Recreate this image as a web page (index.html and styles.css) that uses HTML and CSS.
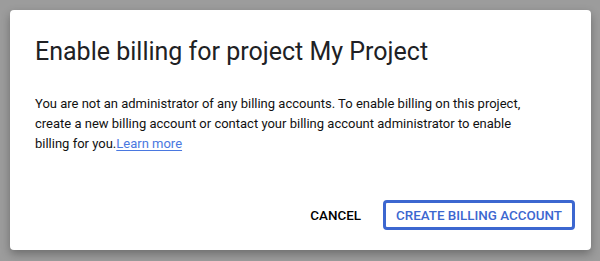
FILE: index.html
```html
<!DOCTYPE html>
<html lang="en">
<head>
  <meta charset="UTF-8">
  <meta name="viewport" content="width=device-width, initial-scale=1.0">
  <title>Enable billing</title>
  <link rel="stylesheet" href="styles.css">
</head>
<body>
  <div class="dialog">
    <h1 class="dialog__title">Enable billing for project My Project</h1>
    <p class="dialog__text">
      You are not an administrator of any billing accounts. To enable billing on this project,
      create a new billing account or contact your billing account administrator to enable<br>
      billing for you.<a class="dialog__link" href="#">Learn more</a>
    </p>
    <div class="dialog__actions">
      <button class="btn btn--text" type="button">Cancel</button>
      <button class="btn btn--outlined" type="button">Create billing account</button>
    </div>
  </div>
</body>
</html>
```

FILE: styles.css
```css
:root {
  --clr-text: #202124;
  --clr-blue: #3c67d0;
  --clr-link: #4a78e0;

  font-family: Roboto, "Liberation Sans", sans-serif;
}

* {
  box-sizing: border-box;
}

html,
body {
  height: 100%;
}

body {
  margin: 0;
  padding: 10px 9px 11px 10px;
  background: #9c9c9c;
}

.dialog {
  height: 100%;
  display: flex;
  flex-direction: column;
  background: #fff;
  border-radius: 4px;
  box-shadow: 0 4px 10px rgba(0, 0, 0, 0.3);
  padding: 26px 16px 20px 25px;
}

.dialog__title {
  margin: 0 0 26px;
  font-size: 25px;
  font-weight: 400;
  line-height: 32px;
  color: var(--clr-text);
}

.dialog__text {
  margin: 0;
  max-width: 520px;
  font-size: 13px;
  line-height: 20px;
  color: #111;
}

.dialog__link {
  color: var(--clr-link);
  text-decoration: underline;
  text-underline-offset: 2px;
}

.dialog__actions {
  margin-top: auto;
  display: flex;
  justify-content: flex-end;
  align-items: center;
  gap: 14px;
}

.btn {
  font-family: inherit;
  font-size: 13.4px;
  font-weight: 500;
  text-transform: uppercase;
  background: none;
  height: 30px;
  padding: 0 8px;
  border-radius: 4px;
  cursor: pointer;
}

.btn--text {
  border: none;
  color: #000;
}

.btn--outlined {
  border: 3px solid var(--clr-blue);
  color: var(--clr-blue);
  padding: 0 10px;
}
```
